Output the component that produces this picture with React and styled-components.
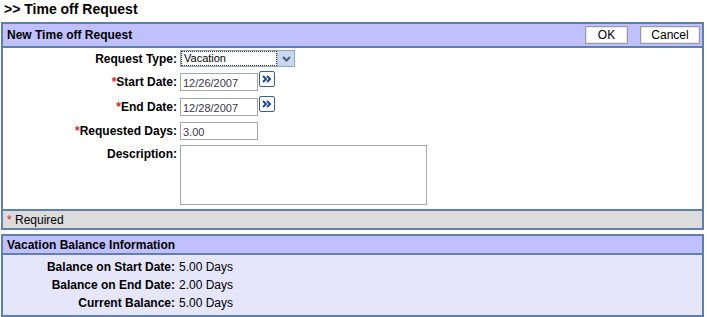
import styled, { createGlobalStyle } from "styled-components"

const Global = createGlobalStyle`
  html, body { margin: 0; padding: 0; background: #fff; }
  body { font-family: "Liberation Sans", Arial, sans-serif; font-size: 12px; color: #000; }
`

const Page = styled.div`
  width: 707px;
  padding: 0 3px 0 1px;
  box-sizing: border-box;
`

const Title = styled.h1`
  margin: 0;
  padding: 1px 0 0 3px;
  height: 22px;
  box-sizing: border-box;
  font-size: 14px;
  font-weight: bold;
  line-height: 17px;
`

const Panel = styled.div`
  border: 2px solid #5f7fae;
  margin-bottom: ${p => p.$gap || 0}px;
`

const Header = styled.div`
  display: flex;
  align-items: center;
  justify-content: space-between;
  height: ${p => p.$h}px;
  background: #c0c0fe;
  border-bottom: 2px solid #5f7fae;
  padding: 0 2px 0 4px;
  font-weight: bold;
  font-size: 12px;
`

const Buttons = styled.div`
  display: flex;
  gap: 12px;
`

const Button = styled.button`
  height: 18px;
  width: ${p => p.$w}px;
  background: #fff;
  border: 1px solid #9a9a9a;
  box-shadow: inset 0 0 0 1px #e8e8e8;
  font-family: "Liberation Sans", Arial, sans-serif;
  font-size: 12px;
  padding: 0;
  color: #000;
`

const Body = styled.div`
  background: #fff;
  padding: 0 0 4px;
`

const Row = styled.div`
  display: flex;
  align-items: ${p => (p.$top ? "flex-start" : "center")};
  height: ${p => p.$h}px;
  padding-top: ${p => (p.$top ? 3 : 0)}px;
`

const Label = styled.div`
  width: 177px;
  text-align: right;
  font-weight: bold;
  font-size: 12px;
  padding-right: 3px;
  box-sizing: border-box;
  flex-shrink: 0;
  padding-top: ${p => (p.$top ? 2 : 0)}px;
`

const Star = styled.span`
  color: #e02020;
`

const FakeSelect = styled.div`
  display: flex;
  align-items: center;
  width: 115px;
  height: 17px;
  border: 1px solid #8ea6c6;
  box-sizing: border-box;
  background: #fff;
`

const SelectText = styled.div`
  flex: 1;
  height: 13px;
  margin: 1px;
  outline: 1px dotted #333;
  font-size: 11px;
  line-height: 13px;
  padding-left: 2px;
`

const Arrow = styled.div`
  width: 16px;
  height: 15px;
  background: #c9d8ef;
  border-left: 1px solid #a9bede;
  display: flex;
  align-items: center;
  justify-content: center;
`

const Field = styled.div`
  width: ${p => p.$w}px;
  height: ${p => p.$h}px;
  border: 1px solid #a7a7a7;
  box-sizing: border-box;
  font-size: 11px;
  color: #3a3450;
  padding: 3px 0 0 2px;
  background: #fff;
`

const DateWrap = styled.div`
  display: flex;
  align-items: flex-start;
  gap: 1px;
`

const CalButton = styled.div`
  width: 16px;
  height: 16px;
  margin-top: -2px;
  border: 1px solid #3a5f94;
  border-radius: 2px;
  box-sizing: border-box;
  background: #fff;
  display: flex;
  align-items: center;
  justify-content: center;
`

const Footer = styled.div`
  background: #dcdcdc;
  border-top: 2px solid #5f7fae;
  height: 17px;
  display: flex;
  align-items: center;
  padding-left: 4px;
  font-size: 12px;
`

const BalanceBody = styled.div`
  background: #e6e6fb;
  padding: 3px 0 3px;
`

const BalRow = styled.div`
  display: flex;
  align-items: center;
  height: 18px;
`

const BalLabel = styled.div`
  width: 172px;
  text-align: right;
  font-weight: bold;
  padding-right: 4px;
  flex-shrink: 0;
`

const Chevrons = () => (
  <svg width="10" height="8" viewBox="0 0 10 8">
    <path d="M1 1 L4 4 L1 7 M5 1 L8 4 L5 7" stroke="#1f4a8a" strokeWidth="2" fill="none" />
  </svg>
)

const Down = () => (
  <svg width="9" height="6" viewBox="0 0 9 6">
    <path d="M1 1 L4.5 4.5 L8 1" stroke="#4a5a7a" strokeWidth="2" fill="none" />
  </svg>
)

function DateField({ value }) {
  return (
    <DateWrap>
      <Field $w={78} $h={18}>{value}</Field>
      <CalButton>
        <Chevrons />
      </CalButton>
    </DateWrap>
  )
}

const balances = [
  ["Balance on Start Date:", "5.00 Days"],
  ["Balance on End Date:", "2.00 Days"],
  ["Current Balance:", "5.00 Days"],
]

export default function App() {
  return (
    <Page>
      <Global />
      <Title>&gt;&gt; Time off Request</Title>
      <Panel $gap={4}>
        <Header $h={22}>
          <span>New Time off Request</span>
          <Buttons>
            <Button $w={43}>OK</Button>
            <Button $w={60}>Cancel</Button>
          </Buttons>
        </Header>
        <Body>
          <Row $h={21}>
            <Label>Request Type:</Label>
            <FakeSelect>
              <SelectText>Vacation</SelectText>
              <Arrow>
                <Down />
              </Arrow>
            </FakeSelect>
          </Row>
          <Row $h={25}>
            <Label>
              <Star>*</Star>Start Date:
            </Label>
            <DateField value="12/26/2007" />
          </Row>
          <Row $h={25}>
            <Label>
              <Star>*</Star>End Date:
            </Label>
            <DateField value="12/28/2007" />
          </Row>
          <Row $h={23}>
            <Label>
              <Star>*</Star>Requested Days:
            </Label>
            <Field $w={78} $h={18}>3.00</Field>
          </Row>
          <Row $h={60} $top>
            <Label $top>Description:</Label>
            <Field $w={247} $h={60} />
          </Row>
        </Body>
        <Footer>
          <Star>*</Star>&nbsp;Required
        </Footer>
      </Panel>
      <Panel>
        <Header $h={17}>
          <span>Vacation Balance Information</span>
        </Header>
        <BalanceBody>
          {balances.map(([l, v]) => (
            <BalRow key={l}>
              <BalLabel>{l}</BalLabel>
              <span>{v}</span>
            </BalRow>
          ))}
        </BalanceBody>
      </Panel>
    </Page>
  )
}
